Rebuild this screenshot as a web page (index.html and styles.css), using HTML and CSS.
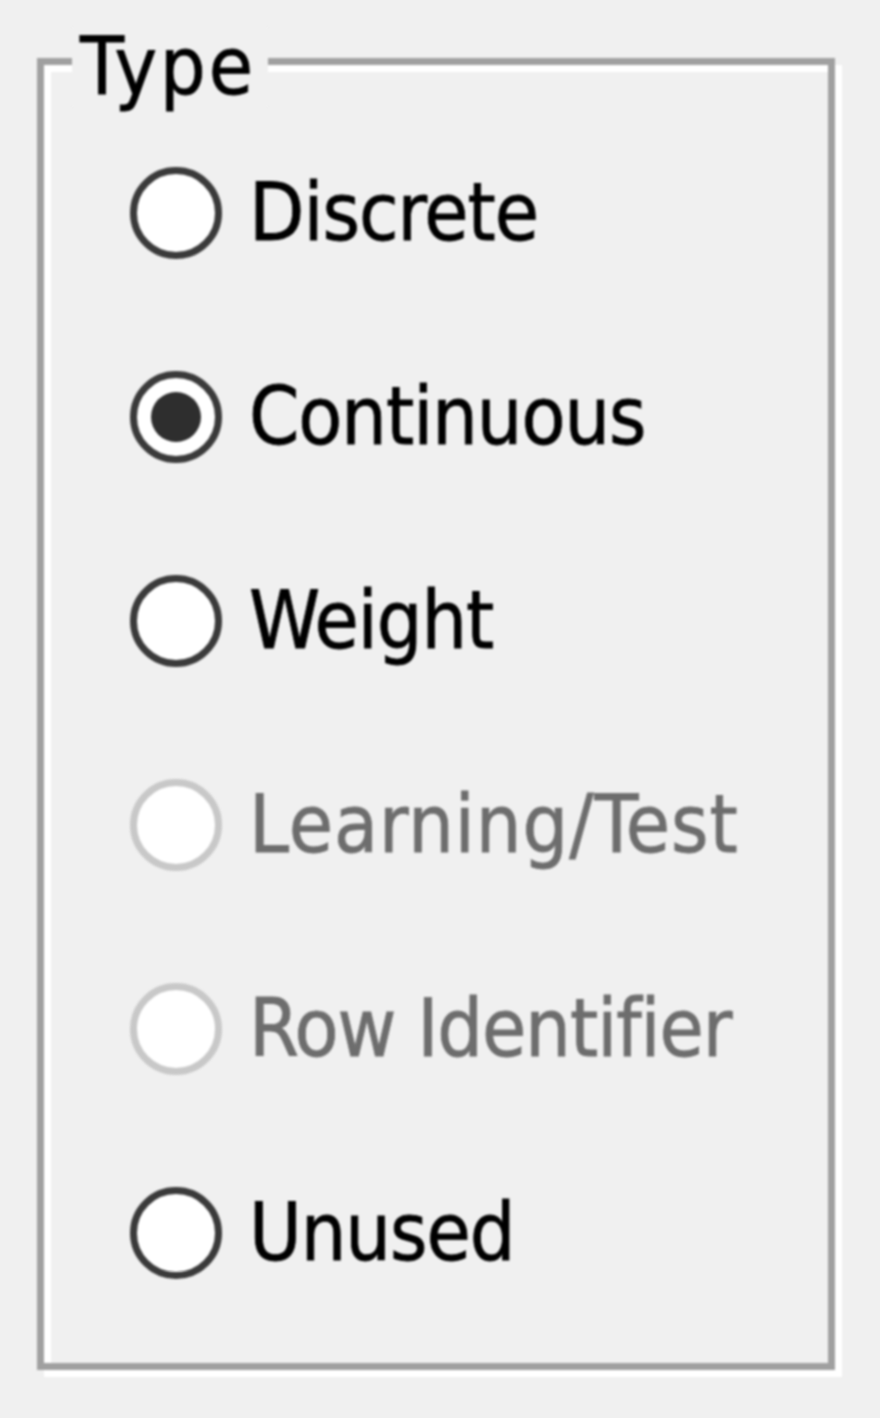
FILE: index.html
```html
<!DOCTYPE html>
<html>
<head>
<meta charset="utf-8">
<link rel="stylesheet" href="styles.css">
</head>
<body>
<div class="group">
  <span class="legend">Type</span>
  <div class="options">
    <div class="option"><span class="radio"></span><span class="label">Discrete</span></div>
    <div class="option"><span class="radio checked"></span><span class="label">Continuous</span></div>
    <div class="option"><span class="radio"></span><span class="label">Weight</span></div>
    <div class="option disabled"><span class="radio"></span><span class="label wide">Learning/Test</span></div>
    <div class="option disabled"><span class="radio"></span><span class="label">Row Identifier</span></div>
    <div class="option"><span class="radio"></span><span class="label">Unused</span></div>
  </div>
</div>
</body>
</html>
```
FILE: styles.css
```css
html, body {
  margin: 0;
  padding: 0;
  background: #f0f0f0;
}
body {
  width: 880px;
  height: 1418px;
  overflow: hidden;
  font-family: "DejaVu Sans Condensed", "DejaVu Sans", sans-serif;
  font-size: 80px;
  line-height: 80px;
  color: #000;
}
.group {
  position: relative;
  box-sizing: border-box;
  margin: 58px 0 0 37px;
  width: 798px;
  height: 1312px;
  border: 7px solid #a0a0a0;
  box-shadow: 7px 7px 0 0 #fff, inset 7px 7px 0 0 #fff;
  filter: blur(1px);
}
.legend {
  position: absolute;
  left: 28px;
  top: -38px;
  padding: 0 12px 0 8px;
  background: #f0f0f0;
  line-height: 80px;
  letter-spacing: 3px;
  -webkit-text-stroke: 0.8px currentColor;
}
.options {
  display: flex;
  flex-direction: column;
  padding-top: 46px;
}
.option {
  display: flex;
  align-items: center;
  height: 204px;
}
.radio {
  box-sizing: border-box;
  width: 92px;
  height: 92px;
  margin-left: 86px;
  border: 7px solid #3a3a3a;
  border-radius: 50%;
  background: #fff;
  display: flex;
  align-items: center;
  justify-content: center;
  flex: none;
}
.radio.checked::after {
  content: "";
  width: 50px;
  height: 50px;
  border-radius: 50%;
  background: #2e2e2e;
}
.label {
  margin-left: 27px;
  letter-spacing: -1px;
  -webkit-text-stroke: 0.8px currentColor;
}
.label.wide {
  letter-spacing: 1px;
}
.disabled .radio {
  border-color: #c8c8c8;
}
.disabled .label {
  color: #6d6d6d;
}
```
